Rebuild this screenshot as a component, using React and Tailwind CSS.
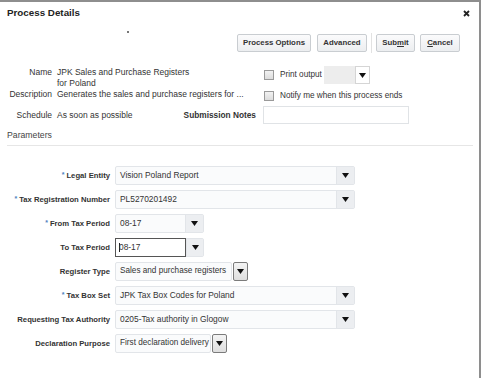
import React from "react";

const Arrow = () => (
  <svg width="7" height="5" viewBox="0 0 7 5">
    <path d="M0 0h7L3.5 5z" fill="#111" />
  </svg>
);

function Checkbox() {
  return (
    <div className="w-[10px] h-[10px] border border-[#9a9a9a] bg-gradient-to-b from-[#f2f2f2] to-[#dcdcdc]" />
  );
}

function Button({ children, w }) {
  return (
    <div
      className={`${w} h-[18px] flex items-center justify-center rounded-[2px] border border-[#c9cdd1] bg-gradient-to-b from-[#fbfbfc] to-[#eceef0] text-[7.8px] font-bold text-[#333]`}
    >
      {children}
    </div>
  );
}

function Select({ value, w }) {
  return (
    <div className={`${w} h-[19px] flex rounded-[2px] border border-[#e2e5e9] bg-[#fafbfc]`}>
      <div className="flex-1 flex items-center pl-[4px] text-[8.4px] text-[#333] whitespace-nowrap overflow-hidden">{value}</div>
      <div className="w-[18px] flex items-center justify-center border-l border-[#e2e5e9] bg-[#eceef1]">
        <Arrow />
      </div>
    </div>
  );
}

function FocusSelect({ value }) {
  return (
    <div className="w-[89px] h-[19px] flex rounded-[2px] border border-[#e2e5e9] bg-[#fafbfc]">
      <div className="w-[71px] -ml-px -my-px flex items-center pl-[3px] border border-[#555] bg-white text-[8.4px] text-[#333]">
        <span className="w-px h-[9px] bg-[#222] -mr-px" />
        {value}
      </div>
      <div className="flex-1 flex items-center justify-center border-l border-[#e2e5e9] bg-[#eceef1]">
        <Arrow />
      </div>
    </div>
  );
}

function ChoiceList({ value, w }) {
  return (
    <div className="flex h-[19px]">
      <div className={`${w} flex items-center pl-[4px] rounded-[2px] border border-[#e2e5e9] bg-[#fafbfc] text-[8.2px] text-[#333] whitespace-nowrap overflow-hidden`}>
        {value}
      </div>
      <div className="ml-px w-[15px] flex items-center justify-center rounded-[2px] border border-[#7b7b7b] bg-gradient-to-b from-[#f4f4f4] to-[#dedede]">
        <Arrow />
      </div>
    </div>
  );
}

function Row({ label, req, children }) {
  return (
    <div className="flex items-center h-[19px]">
      <div className="w-[110px] text-right text-[7.7px] font-bold text-[#333] whitespace-nowrap">
        {req && <span className="text-[#4f82c0] text-[7px] align-top mr-[2px]">*</span>}
        {label}
      </div>
      <div className="ml-[5px]">{children}</div>
    </div>
  );
}

export default function App() {
  return (
    <div className="w-[481px] h-[378px] bg-white border-t-2 border-r-2 border-[#8e8e8e] font-['Liberation_Sans',Arial,sans-serif] text-[#333] overflow-hidden">
      <div className="flex items-center justify-between h-[22px] pl-[7px] pr-[9px]">
        <div className="text-[9.8px] font-bold text-[#222]">Process Details</div>
        <svg width="7" height="7" viewBox="0 0 7 7">
          <path d="M1 1l5 5M6 1L1 6" stroke="#222" strokeWidth="1.8" />
        </svg>
      </div>

      <div className="h-[10px] pl-[127px] pt-[7px]">
        <div className="w-[2px] h-[2px] bg-[#777]" />
      </div>

      <div className="flex justify-end items-center h-[18px] pr-[19px]">
        <Button w="w-[74px]">Process Options</Button>
        <div className="w-[6px]" />
        <Button w="w-[50px]">Advanced</Button>
        <div className="mx-[4px] w-px h-[20px] bg-[#e2e2e2]" />
        <Button w="w-[39px]">
          <span>
            Sub<span className="underline">m</span>it
          </span>
        </Button>
        <div className="w-[5px]" />
        <Button w="w-[40px]">
          <span>
            <span className="underline">C</span>ancel
          </span>
        </Button>
      </div>

      <div className="flex mt-[14px] h-[35px]">
        <div className="w-[264px] pt-px grid grid-cols-[52px_1fr] gap-x-[5px] text-[8.5px] leading-[10.5px] text-[#333]">
          <div className="text-right">Name</div>
          <div>
            JPK Sales and Purchase Registers
            <br />
            for Poland
          </div>
          <div className="text-right whitespace-nowrap">Description</div>
          <div className="whitespace-nowrap">Generates the sales and purchase registers for ...</div>
        </div>
        <div className="flex flex-col text-[8.2px] text-[#333]">
          <div className="flex items-center h-[18px]">
            <Checkbox />
            <span className="ml-[6px] w-[44px]">Print output</span>
            <div className="flex h-[18px]">
              <div className="w-[31px] bg-[#ededed]" />
              <div className="w-[15px] flex items-center justify-center border border-[#d5d5d5] bg-white">
                <Arrow />
              </div>
            </div>
          </div>
          <div className="flex items-center h-[10px] mt-[7px]">
            <Checkbox />
            <span className="ml-[6px]">Notify me when this process ends</span>
          </div>
        </div>
      </div>

      <div className="flex items-center h-[18px] mt-[5px] text-[8.5px] text-[#333]">
        <div className="w-[52px] text-right">Schedule</div>
        <div className="ml-[5px] w-[199px] flex justify-between">
          <span>As soon as possible</span>
          <span className="font-bold text-[8.3px]">Submission Notes</span>
        </div>
        <div className="ml-[7px] w-[146px] h-[18px] border border-[#e0e3e6] bg-white" />
      </div>

      <div className="ml-[7px] w-[466px] mt-[6px] pb-[5px] border-b border-[#e6e6e6] text-[8.7px] leading-[10px] text-[#444]">
        Parameters
      </div>

      <div className="mt-[20px] flex flex-col gap-[5px]">
        <Row label="Legal Entity" req>
          <Select w="w-[240px]" value="Vision Poland Report" />
        </Row>
        <Row label="Tax Registration Number" req>
          <Select w="w-[240px]" value="PL5270201492" />
        </Row>
        <Row label="From Tax Period" req>
          <Select w="w-[89px]" value="08-17" />
        </Row>
        <Row label="To Tax Period">
          <FocusSelect value="08-17" />
        </Row>
        <Row label="Register Type">
          <ChoiceList w="w-[117px]" value="Sales and purchase registers" />
        </Row>
        <Row label="Tax Box Set" req>
          <Select w="w-[240px]" value="JPK Tax Box Codes for Poland" />
        </Row>
        <Row label="Requesting Tax Authority">
          <Select w="w-[240px]" value="0205-Tax authority in Glogow" />
        </Row>
        <Row label="Declaration Purpose">
          <ChoiceList w="w-[96px]" value="First declaration delivery" />
        </Row>
      </div>
    </div>
  );
}
